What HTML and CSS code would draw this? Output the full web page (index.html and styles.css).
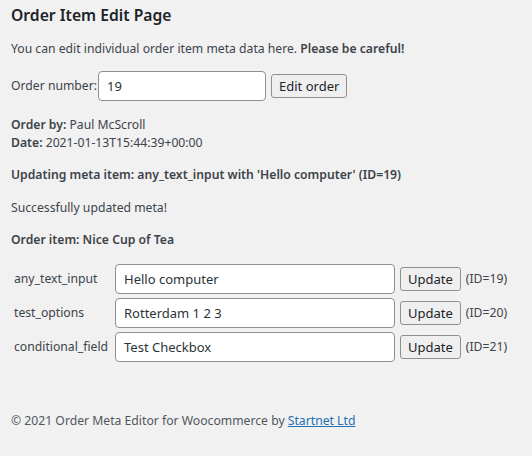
FILE: index.html
```html
<!DOCTYPE html>
<html lang="en">
<head>
<meta charset="utf-8">
<title>Order Item Edit Page</title>
<link rel="stylesheet" href="styles.css">
</head>
<body>
<div class="wrap">
  <h1 class="title">Order Item Edit Page</h1>
  <p class="intro">You can edit individual order item meta data here. <strong>Please be careful!</strong></p>
  <form class="order-form">
    <label class="order-label" for="order">Order number:</label>
    <input class="field order-field" id="order" type="text" value="19">
    <button class="btn" type="button">Edit order</button>
  </form>
  <p class="meta"><strong>Order by:</strong> Paul McScroll<br><strong>Date:</strong> 2021-01-13T15:44:39+00:00</p>
  <p class="line"><strong>Updating meta item: any_text_input with 'Hello computer' (ID=19)</strong></p>
  <p class="line gap15">Successfully updated meta!</p>
  <p class="line"><strong>Order item: Nice Cup of Tea</strong></p>
  <table class="items">
    <tr>
      <td class="key">any_text_input</td>
      <td><input class="field item-field" type="text" value="Hello computer"></td>
      <td><button class="btn" type="button">Update</button></td>
      <td class="id">(ID=19)</td>
    </tr>
    <tr>
      <td class="key">test_options</td>
      <td><input class="field item-field" type="text" value="Rotterdam 1 2 3"></td>
      <td><button class="btn" type="button">Update</button></td>
      <td class="id">(ID=20)</td>
    </tr>
    <tr>
      <td class="key">conditional_field</td>
      <td><input class="field item-field" type="text" value="Test Checkbox"></td>
      <td><button class="btn" type="button">Update</button></td>
      <td class="id">(ID=21)</td>
    </tr>
  </table>
  <p class="footer">© 2021 Order Meta Editor for Woocommerce by <a href="#">Startnet Ltd</a></p>
</div>
</body>
</html>
```

FILE: styles.css
```css
html, body {
  margin: 0;
  padding: 0;
  background: #f1f1f1;
}
body {
  font-family: "Noto Sans", "Open Sans", sans-serif;
  font-size: 12.2px;
  line-height: 18px;
  color: #3c434a;
}
.wrap {
  padding: 0 11px;
}
.title {
  margin: 4px 0 0;
  font-size: 15.7px;
  line-height: 22px;
  font-weight: 600;
  color: #1d2327;
}
strong {
  font-weight: 600;
}
p {
  margin: 0;
}
.intro {
  margin-top: 14px;
}
.order-form {
  display: flex;
  align-items: center;
  margin-top: 13px;
  height: 30px;
}
.order-label {
  margin-right: 1px;
}
.field {
  box-sizing: border-box;
  height: 30px;
  padding: 0 8px;
  border: 1px solid #8c8f94;
  border-radius: 4px;
  background: #fff;
  color: #2c3338;
  font-family: "Noto Sans", "Open Sans", sans-serif;
  font-size: 13px;
  margin: 0;
}
.order-field {
  width: 168px;
}
.btn {
  box-sizing: border-box;
  height: 24px;
  padding: 0 7px;
  border: 1px solid #8f8f8f;
  border-radius: 3px;
  background: #efefef;
  color: #1d2327;
  font-family: "Noto Sans", "Open Sans", sans-serif;
  font-size: 13px;
  line-height: 20px;
  margin: 0;
}
.order-form .btn {
  margin-left: 5px;
}
.meta {
  margin-top: 15px;
}
.line {
  margin-top: 14px;
}
.line.gap15 {
  margin-top: 15px;
}
.items {
  margin-top: 12px;
  border-spacing: 2px;
}
.items td {
  padding: 1px;
  vertical-align: middle;
  white-space: nowrap;
}
.items td.key {
  width: 97px;
}
.item-field {
  width: 280px;
  display: block;
}
.items .btn {
  display: block;
  margin-left: 1px;
}
.items td.id {
  padding-left: 2px;
}
.footer {
  margin-top: 47px;
  color: #50575e;
}
.footer a {
  color: #2271b1;
  text-decoration: underline;
}
```
